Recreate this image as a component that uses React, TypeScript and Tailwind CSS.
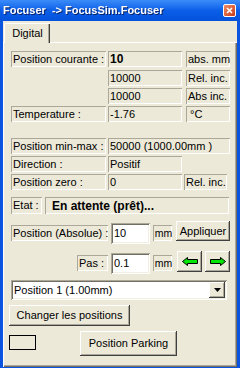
import type { ReactNode } from 'react';

// Win XP style 3D edges
const sunken = 'shadow-[inset_1px_1px_0_#aca899,inset_-1px_-1px_0_#ffffff]';
const raised =
    'bg-[#ece9d8] shadow-[inset_-1px_-1px_0_#404040,inset_1px_1px_0_#ffffff,inset_-2px_-2px_0_#aca899]';
const field =
    'bg-white shadow-[inset_1px_1px_0_#aca899,inset_-1px_-1px_0_#ffffff,inset_2px_2px_0_#716f64,inset_-2px_-2px_0_#f1efe2]';

function Cell({ className = '', children }: { className?: string; children?: ReactNode }) {
    return (
        <div className={`h-[16px] flex items-center pl-[2px] whitespace-nowrap overflow-hidden ${sunken} ${className}`}>
            {children}
        </div>
    );
}

function Arrow({ dir }: { dir: 'left' | 'right' }) {
    const pts =
        dir === 'left'
            ? '0.5,4.5 5.5,0.5 5.5,2.5 15.5,2.5 15.5,6.5 5.5,6.5 5.5,8.5'
            : '15.5,4.5 10.5,0.5 10.5,2.5 0.5,2.5 0.5,6.5 10.5,6.5 10.5,8.5';
    return (
        <svg width="16" height="9" viewBox="0 0 16 9">
            <polygon points={pts} fill="#00e600" stroke="#000000" strokeWidth="1" />
        </svg>
    );
}

export default function App() {
    return (
        <div className="w-[240px] h-[368px] bg-[#0a54e0] flex flex-col font-['Liberation_Sans',Arial,sans-serif] text-[11px] text-black leading-none">
            {/* Title bar */}
            <div className="h-[21px] shrink-0 flex items-center pl-[3px] pr-[4px] bg-linear-to-b from-[#3a8cf8] via-[#0a5ee8] to-[#0552dc]">
                <span className="text-white font-bold text-[11px] whitespace-pre drop-shadow-[1px_1px_0_#0a246a]">
                    {'Focuser  -> FocusSim.Focuser'}
                </span>
                <div className="ml-auto w-[13px] h-[13px] rounded-[2px] border border-white bg-linear-to-br from-[#f08a62] to-[#c93a12] flex items-center justify-center">
                    <svg width="7" height="7" viewBox="0 0 7 7">
                        <path d="M1 1L6 6M6 1L1 6" stroke="#ffffff" strokeWidth="1.6" />
                    </svg>
                </div>
            </div>

            {/* Client area */}
            <div className="flex-1 mx-[3px] mb-[1px] bg-[#ece9d8] flex flex-col">
                {/* Tab strip */}
                <div className="h-[21px] shrink-0 flex items-end pl-[1px]">
                    <div className="relative z-10 -mb-px w-[46px] h-[20px] bg-[#ece9d8] border-t border-l border-white rounded-tl-[2px] shadow-[inset_-1px_0_0_#404040,inset_-2px_0_0_#aca899] flex items-center justify-center pb-[1px]">
                        Digital
                    </div>
                </div>

                {/* Tab page */}
                <div className="flex-1 border-t border-l border-white shadow-[inset_-1px_-1px_0_#716f64,inset_-2px_-2px_0_#aca899] pl-[7px] flex flex-col">
                    <div className="flex mt-[8px]">
                        <Cell className="w-[95px]">Position courante :</Cell>
                        <Cell className="w-[74px] ml-[2px] font-bold text-[12px]">10</Cell>
                        <Cell className="w-[44px] ml-[4px]">abs. mm</Cell>
                    </div>
                    <div className="flex mt-[3px]">
                        <div className="w-[95px]" />
                        <Cell className="w-[74px] ml-[2px]">10000</Cell>
                        <Cell className="w-[44px] ml-[4px]">Rel. inc.</Cell>
                    </div>
                    <div className="flex mt-[2px]">
                        <div className="w-[95px]" />
                        <Cell className="w-[74px] ml-[2px]">10000</Cell>
                        <Cell className="w-[44px] ml-[4px]">Abs inc.</Cell>
                    </div>
                    <div className="flex mt-[2px]">
                        <Cell className="w-[95px]">Temperature :</Cell>
                        <Cell className="w-[74px] ml-[2px]">-1.76</Cell>
                        <Cell className="w-[44px] ml-[4px] pl-[4px]">°C</Cell>
                    </div>

                    <div className="flex mt-[16px]">
                        <Cell className="w-[95px]">Position min-max :</Cell>
                        <Cell className="w-[122px] ml-[2px]">50000 (1000.00mm )</Cell>
                    </div>
                    <div className="flex mt-[2px]">
                        <Cell className="w-[95px]">Direction :</Cell>
                        <Cell className="w-[74px] ml-[2px]">Positif</Cell>
                    </div>
                    <div className="flex mt-[2px]">
                        <Cell className="w-[95px]">Position zero :</Cell>
                        <Cell className="w-[74px] ml-[2px]">0</Cell>
                        <Cell className="w-[43px] ml-[2px]">Rel. inc.</Cell>
                    </div>

                    <div className="flex mt-[7px]">
                        <Cell className="w-[31px] h-[17px]">Etat :</Cell>
                        <Cell className="w-[184px] h-[17px] ml-[3px] pl-[7px] font-bold text-[12px]">
                            En attente (prêt)...
                        </Cell>
                    </div>

                    {/* Absolute position */}
                    <div className="flex items-start mt-[7px]">
                        <Cell className="w-[97px] mt-[4px]">Position (Absolue) :</Cell>
                        <div className={`w-[39px] h-[21px] ml-[3px] mt-[2px] flex items-center pl-[3px] ${field}`}>10</div>
                        <Cell className="w-[19px] ml-[3px] mt-[4px] pl-0 justify-center text-[10.5px]">mm</Cell>
                        <div className={`w-[54px] h-[20px] ml-[4px] flex items-center justify-center ${raised}`}>
                            Appliquer
                        </div>
                    </div>

                    {/* Step */}
                    <div className="flex items-start mt-[7px]">
                        <Cell className="w-[31px] ml-[66px] mt-[4px]">Pas :</Cell>
                        <div className={`w-[39px] h-[21px] ml-[3px] mt-[2px] flex items-center pl-[3px] ${field}`}>0.1</div>
                        <Cell className="w-[19px] ml-[3px] mt-[4px] pl-0 justify-center text-[10.5px]">mm</Cell>
                        <div className={`w-[25px] h-[21px] ml-[5px] flex items-center justify-center ${raised}`}>
                            <Arrow dir="left" />
                        </div>
                        <div className={`w-[25px] h-[21px] ml-[3px] flex items-center justify-center ${raised}`}>
                            <Arrow dir="right" />
                        </div>
                    </div>

                    {/* Preset combo */}
                    <div className={`w-[216px] h-[20px] mt-[6px] flex items-center pl-[3px] pr-[2px] ${field}`}>
                        <span className="flex-1">Position 1 (1.00mm)</span>
                        <div className={`w-[16px] h-[16px] flex items-center justify-center ${raised}`}>
                            <svg width="7" height="4" viewBox="0 0 7 4">
                                <path d="M0 0H7L3.5 4Z" fill="#000000" />
                            </svg>
                        </div>
                    </div>

                    <div className={`w-[121px] h-[21px] -ml-[2px] mt-[5px] flex items-center justify-center ${raised}`}>
                        Changer les positions
                    </div>

                    <div className="flex items-start -ml-[2px] mt-[5px]">
                        <div className="w-[27px] h-[15px] mt-[4px] border border-black" />
                        <div className={`w-[97px] h-[25px] ml-[44px] flex items-center justify-center ${raised}`}>
                            Position Parking
                        </div>
                    </div>
                </div>
            </div>
        </div>
    );
}
